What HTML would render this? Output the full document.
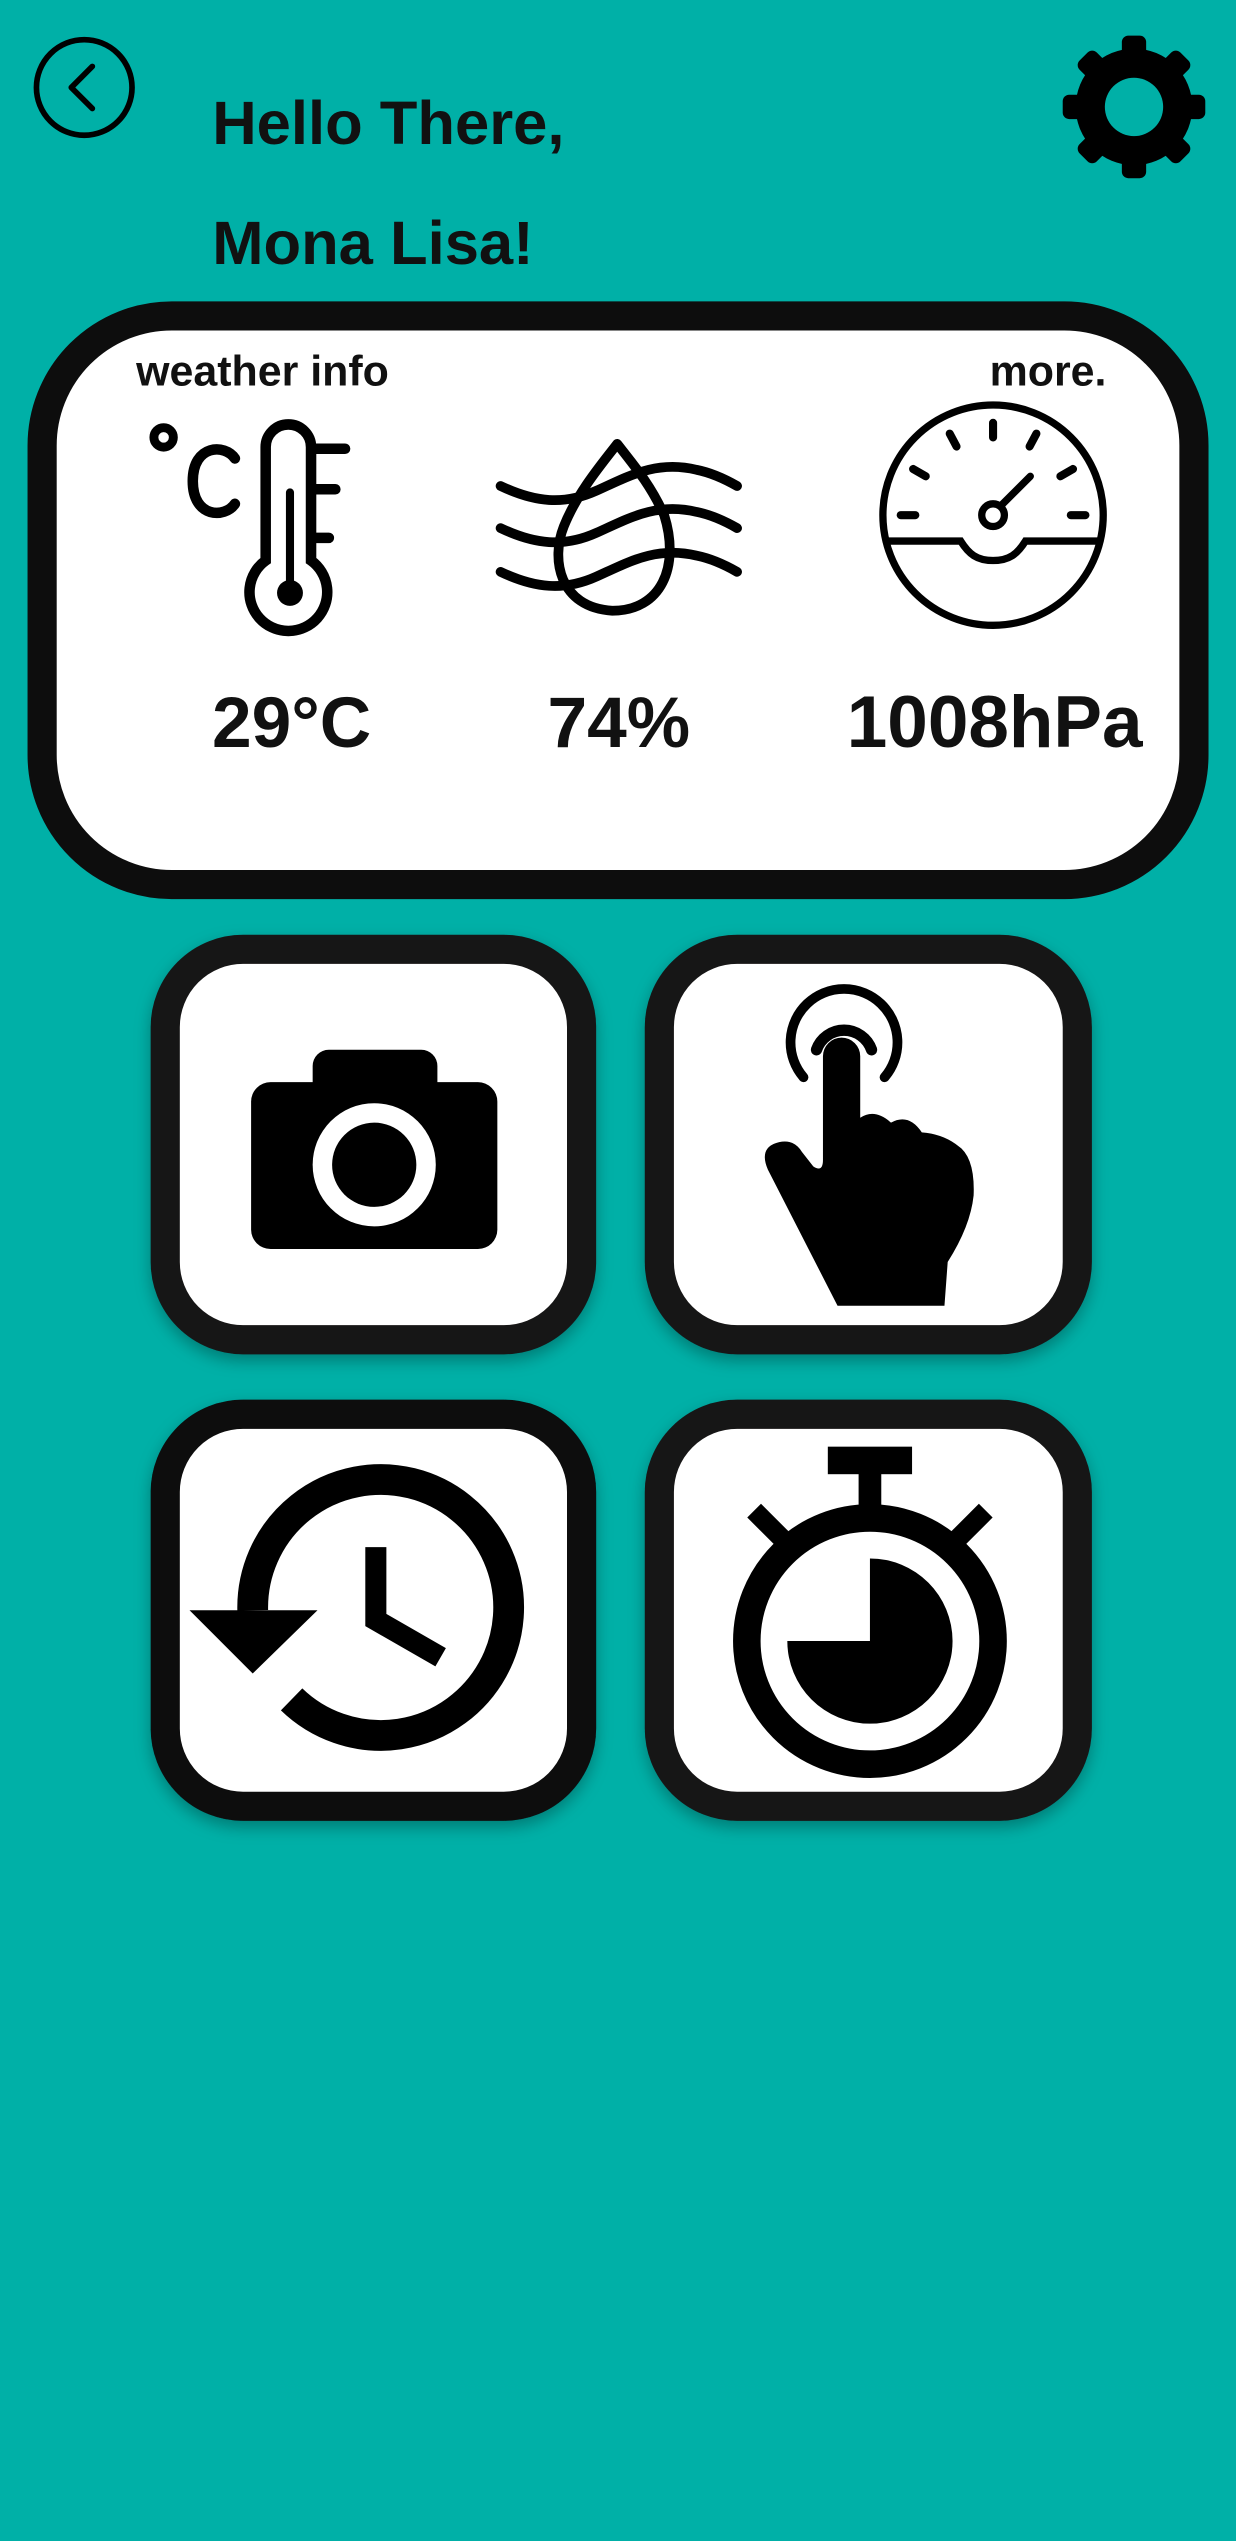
<!DOCTYPE html>
<html><head><meta charset="utf-8"><style>
html,body{margin:0;padding:0;background:#00b0a7;}
svg{display:block}
text{font-family:"Liberation Sans",sans-serif;font-weight:bold;fill:#111;}
</style></head><body>
<svg width="1236" height="2541" viewBox="0 0 1236 2541">
<defs>
<filter id="sh" x="-10%" y="-10%" width="120%" height="125%"><feDropShadow dx="0" dy="4" stdDeviation="5" flood-color="#000" flood-opacity="0.3"/></filter>
</defs>
<rect width="1236" height="2541" fill="#00b0a7"/>
<g transform="scale(1.62)">
<circle cx="52" cy="54" r="29.5" fill="none" stroke="#000" stroke-width="3.5"/>
<path d="M57 41 L44 54 L57 67" fill="none" stroke="#000" stroke-width="3.5" stroke-linecap="round" stroke-linejoin="round"/>
<g transform="translate(700,66)">
<circle r="36" fill="#000"/>
<g fill="#000">
<rect x="-7.5" y="-44" width="15" height="20" rx="4"/>
<rect x="-7.5" y="-44" width="15" height="20" rx="4" transform="rotate(45)"/>
<rect x="-7.5" y="-44" width="15" height="20" rx="4" transform="rotate(90)"/>
<rect x="-7.5" y="-44" width="15" height="20" rx="4" transform="rotate(135)"/>
<rect x="-7.5" y="-44" width="15" height="20" rx="4" transform="rotate(180)"/>
<rect x="-7.5" y="-44" width="15" height="20" rx="4" transform="rotate(225)"/>
<rect x="-7.5" y="-44" width="15" height="20" rx="4" transform="rotate(270)"/>
<rect x="-7.5" y="-44" width="15" height="20" rx="4" transform="rotate(315)"/>
</g>
<circle r="18" fill="#00b0a7"/>
</g>
<text x="131" y="89" font-size="38">Hello There,</text>
<text x="131" y="163" font-size="38">Mona Lisa!</text>
<rect x="26" y="195" width="711" height="351" rx="80" fill="#fff" stroke="#0d0d0d" stroke-width="18"/>
<text x="84" y="238" font-size="26.5">weather info</text>
<text x="683" y="238" font-size="26.5" text-anchor="end">more.</text>
<g fill="none" stroke="#000" stroke-linecap="round">
<circle cx="101" cy="270" r="6" stroke-width="5.5"/>
<path d="M145 283 C139 274 119 274 119 297 C119 320 139 320 145 311" stroke-width="6.5"/>
<path d="M164 346 V276 A14 14 0 0 1 192 276 V346 A24 24 0 1 1 164 346 Z" stroke-width="6.5"/>
<line x1="179" y1="304" x2="179" y2="362" stroke-width="5"/>
<path d="M194 277 H213 M194 302 H207 M194 332 H203" stroke-width="6.5"/>
</g>
<circle cx="179" cy="366" r="8" fill="#000"/>
<g fill="none" stroke="#000" stroke-width="6" stroke-linecap="round" stroke-linejoin="round">
<path d="M309 300 C330 310 348 312 368 303 C388 294 405 284 430 290 C440 292 448 296 455 300"/>
<path d="M309 326 C330 336 348 338 368 329 C388 320 405 310 430 316 C440 318 448 322 455 326"/>
<path d="M309 353 C330 363 348 365 368 356 C388 347 405 337 430 343 C440 345 448 349 455 353"/>
<path d="M381 274 C370 288 356 305 348 325 C340 345 345 375 378 377 C408 377 420 350 410 318 C402 300 392 288 381 274 Z"/>
</g>
<g fill="none" stroke="#000" stroke-linecap="round">
<circle cx="613" cy="318" r="68" stroke-width="4.5"/>
<path d="M547 334 H593 C598 342 603 346 613 346 C623 346 628 342 633 334 H679" stroke-width="4.5"/>
<circle cx="613" cy="318" r="7" stroke-width="4.5"/>
<line x1="618" y1="312" x2="636" y2="294" stroke-width="4.5"/>
<g stroke-width="5" transform="translate(613,318)">
<line x1="0" y1="-57" x2="0" y2="-48"/>
<line x1="0" y1="-57" x2="0" y2="-48" transform="rotate(28)"/>
<line x1="0" y1="-57" x2="0" y2="-48" transform="rotate(-28)"/>
<line x1="0" y1="-57" x2="0" y2="-48" transform="rotate(60)"/>
<line x1="0" y1="-57" x2="0" y2="-48" transform="rotate(-60)"/>
<line x1="0" y1="-57" x2="0" y2="-48" transform="rotate(90)"/>
<line x1="0" y1="-57" x2="0" y2="-48" transform="rotate(-90)"/>
</g>
</g>
<text x="180" y="461" font-size="44" text-anchor="middle">29°C</text>
<text x="382" y="461" font-size="44" text-anchor="middle">74%</text>
<text x="614" y="461" font-size="45" text-anchor="middle">1008hPa</text>
<g filter="url(#sh)" fill="#fff" stroke="#181616" stroke-width="18">
<rect x="102" y="586" width="257" height="241" rx="48"/>
<rect x="407" y="586" width="258" height="241" rx="48"/>
<rect x="102" y="873" width="257" height="242" rx="48" stroke="#0b0b0b"/>
<rect x="407" y="873" width="258" height="242" rx="48"/>
</g>
<rect x="155" y="668" width="152" height="103" rx="12" fill="#000"/>
<rect x="193" y="648" width="77" height="30" rx="10" fill="#000"/>
<circle cx="231" cy="719" r="38" fill="#fff"/>
<circle cx="231" cy="719" r="26" fill="#000"/>
<path d="M508 716 V652 A11.5 11.5 0 0 1 531 652 V690 Q540 684 550 693 Q561 687 569 699 Q582 700 591 707 Q602 714 601 738 Q599 757 585 779 L583 806 H517 L474 722 Q468 708 481 705 Q490 703 495 711 L502 720 Q508 724 508 716 Z" fill="#000"/>
<g fill="none" stroke="#000" stroke-linecap="round">
<path d="M496 665 A33 33 0 1 1 546 665" stroke-width="6"/>
<path d="M504 648 A18 18 0 0 1 538 648" stroke-width="7"/>
</g>
<path d="M156 994 A79 79 0 1 1 180 1049" fill="none" stroke="#000" stroke-width="19"/>
<path d="M117 994 H196 L156 1033 Z" fill="#000"/>
<path d="M232 955 V1000 L272 1023" fill="none" stroke="#000" stroke-width="13"/>
<circle cx="537" cy="1013" r="76" fill="none" stroke="#000" stroke-width="17"/>
<path d="M537 962 A51 51 0 1 1 486 1013 H537 Z" fill="#000"/>
<rect x="511" y="893" width="52" height="17" fill="#000"/>
<rect x="530" y="908" width="14" height="22" fill="#000"/>
<rect x="462" y="935" width="24" height="12" fill="#000" transform="rotate(45 474 941)"/>
<rect x="588" y="935" width="24" height="12" fill="#000" transform="rotate(-45 600 941)"/>
</g>
</svg>
</body></html>
